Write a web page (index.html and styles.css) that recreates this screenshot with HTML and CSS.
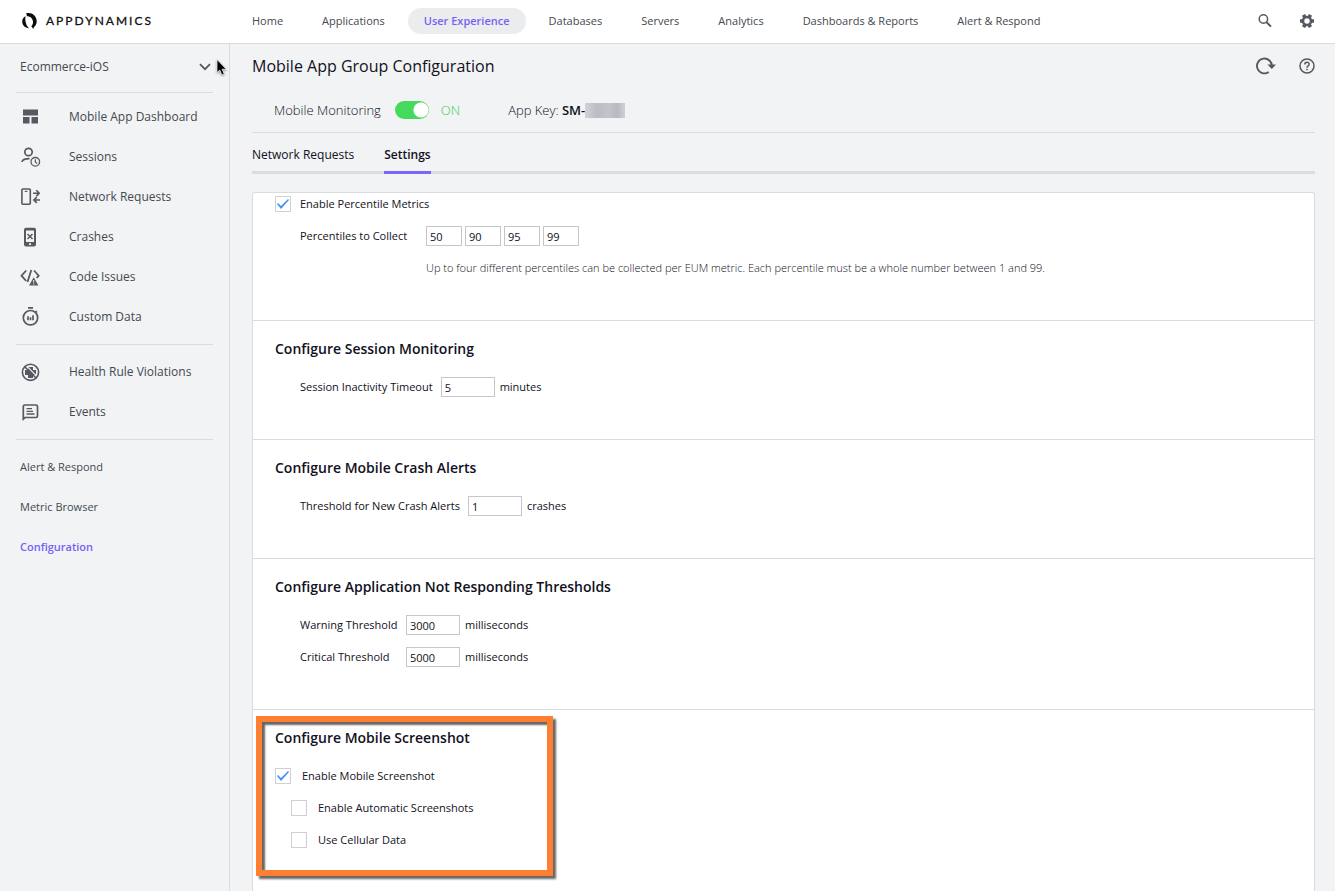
FILE: index.html
```html
<!DOCTYPE html>
<html lang="en">

<head>
    <meta charset="utf-8">
    <meta name="viewport" content="width=device-width, initial-scale=1.0">
    <title>Mobile App Group Configuration</title>
    <link rel="stylesheet" href="styles.css">
</head>

<body>
    <header class="topbar">
        <a class="logo" href="#">
            <svg width="16" height="18" viewBox="0 0 16 18" fill="#0c0c0c">
                <path d="M4.200 1.300C9 -.200 14.700 3.300 14.700 9.200C14.700 12 13.500 14 11.800 15.200L11.300 17L9.300 14.300C10.600 13 11.200 11.500 11 9.600C10.700 6.300 8.300 4.200 5 4.200Z"/>
                <path d="M3.600 4C1.300 5.400 .100 7.400 .200 9.700C.400 13.300 3 15.900 7 16.200C5.300 14.800 4.400 13 3.900 11C3.300 8.700 3 6.300 3.600 4Z"/>
            </svg>
            <span>APPDYNAMICS</span>
        </a>
        <nav class="topnav">
            <a href="#">Home</a>
            <a href="#">Applications</a>
            <a href="#" class="active">User Experience</a>
            <a href="#">Databases</a>
            <a href="#">Servers</a>
            <a href="#">Analytics</a>
            <a href="#">Dashboards &amp; Reports</a>
            <a href="#">Alert &amp; Respond</a>
        </nav>
        <div class="tools">
            <button class="icon-btn" aria-label="Search">
                <svg width="16" height="16" viewBox="0 0 16 16" fill="none" stroke="#555a61">
                    <circle cx="6.400" cy="6" r="4.200" stroke-width="1.500"/>
                    <path d="M9.600 9.200L14 13.600" stroke-width="2"/>
                </svg>
            </button>
            <button class="icon-btn" aria-label="Settings">
                <svg width="16" height="16" viewBox="0 0 16 16">
                    <g stroke="#555a61" stroke-width="3.600">
                        <path d="M1 8H15M4.500 1.940L11.500 14.060M11.500 1.940L4.500 14.060"/>
                    </g>
                    <circle cx="8" cy="8" r="5.300" fill="#555a61"/>
                    <circle cx="8" cy="8" r="2.700" fill="#fff"/>
                </svg>
            </button>
        </div>
    </header>

    <div class="layout">
        <aside class="sidebar">
            <div class="app-picker">
                <select aria-label="Application">
                    <option>Ecommerce-iOS</option>
                </select>
                <svg width="12" height="8" viewBox="0 0 12 8" fill="none" stroke="#555a61" stroke-width="1.800">
                    <path d="M1 1.200L6 6.200L11 1.200"/>
                </svg>
            </div>
            <nav class="menu">
                <a href="#">
                    <svg width="20" height="20" viewBox="0 0 20 20" fill="#555a61">
                        <path d="M3 2.500H18V8.500H3ZM3 10H9.500V16.500H3ZM11.500 10H18V16.500H11.500Z"/>
                    </svg>
                    Mobile App Dashboard
                </a>
                <a href="#">
                    <svg width="20" height="20" viewBox="0 0 20 20" fill="none" stroke="#555a61" stroke-width="1.700">
                        <circle cx="8.500" cy="5" r="3.700"/>
                        <path d="M2 15C2.300 12.700 4.500 11.700 9.500 11.700"/>
                        <circle cx="15.300" cy="14.800" r="4.300" stroke-width="1.300"/>
                        <path d="M15.300 12.200V15L17.200 16.600" stroke-width="1.200"/>
                    </svg>
                    Sessions
                </a>
                <a href="#">
                    <svg width="20" height="20" viewBox="0 0 20 20" fill="none" stroke="#555a61" stroke-width="1.600">
                        <rect x="1.900" y="2" width="8.400" height="15.300" rx="1"/>
                        <path d="M4.800 4.400H7.400" stroke-width="1.200"/>
                        <path d="M13 6.200H18.500M16.300 3.300L19.200 6.200L16.300 9.100M20 13H14M16.800 10.100L13.900 13L16.800 15.900"/>
                    </svg>
                    Network Requests
                </a>
                <a href="#">
                    <svg width="20" height="20" viewBox="0 0 20 20">
                        <path d="M6 .800H14A2 2 0 0 1 16 2.800V17.600A2 2 0 0 1 14 19.600H6A2 2 0 0 1 4 17.600V2.800A2 2 0 0 1 6 .800ZM6 3.500V15H14V3.500ZM9 16.300V18.100H11V16.300Z" fill="#555a61" fill-rule="evenodd"/>
                        <path d="M7.500 7L12.500 12M12.500 7L7.500 12" stroke="#555a61" stroke-width="1.500"/>
                    </svg>
                    Crashes
                </a>
                <a href="#">
                    <svg width="20" height="20" viewBox="0 0 20 20" fill="none" stroke="#555a61" stroke-width="1.800">
                        <path d="M6.200 3.500L1.500 8.700L6.200 14M14 3.500L18.700 8.700L16.700 11M11.300 3L7.500 15"/>
                        <path d="M13.700 10.200L18.400 18.600H9Z" fill="#555a61" stroke="none"/>
                        <path d="M13.700 13V15.500M13.700 16.300V17.500" stroke="#f1f3f5" stroke-width="1"/>
                    </svg>
                    Code Issues
                </a>
                <a href="#">
                    <svg width="20" height="20" viewBox="0 0 20 20" fill="none" stroke="#555a61" stroke-width="1.700">
                        <circle cx="10.500" cy="10.700" r="7.200"/>
                        <path d="M8 .900H13M15.500 4L17 5.500"/>
                        <path d="M8 9.200V13.200M10.500 10.200V13.200M13 8.200V13.200"/>
                    </svg>
                    Custom Data
                </a>
            </nav>
            <nav class="menu">
                <a href="#">
                    <svg width="20" height="20" viewBox="0 0 20 20">
                        <path d="M8 5H13V8H16V13H13V16H8V13H5V8H8Z" fill="#555a61"/>
                        <path d="M5.800 3.200L18 15.400" stroke="#f1f3f5" stroke-width="1.200"/>
                        <circle cx="10.500" cy="10.300" r="8.100" fill="none" stroke="#555a61" stroke-width="1.600"/>
                        <path d="M4.500 4.500L16.500 16.500" stroke="#555a61" stroke-width="1.600"/>
                    </svg>
                    Health Rule Violations
                </a>
                <a href="#">
                    <svg width="20" height="20" viewBox="0 0 20 20" fill="none" stroke="#555a61" stroke-width="1.700">
                        <path d="M3.300 17V4.500Q3.300 3 4.800 3H16Q17.500 3 17.500 4.500V14Q17.500 15.500 16 15.500H5Z"/>
                        <path d="M6.500 6.600H12M6.500 9.300H13M6.500 12H14.500" stroke-width="1.300"/>
                    </svg>
                    Events
                </a>
            </nav>
            <nav class="menu menu-small">
                <a href="#">Alert &amp; Respond</a>
                <a href="#">Metric Browser</a>
                <a href="#" class="active">Configuration</a>
            </nav>
        </aside>

        <main class="content">
            <div class="title-row">
                <h1>Mobile App Group Configuration</h1>
                <div class="tools">
                    <button class="icon-btn" aria-label="Refresh">
                        <svg width="20" height="20" viewBox="0 0 20 20" fill="none" stroke="#555a61" stroke-width="1.900">
                            <path d="M13.700 16A7.400 7.400 0 1 1 16.800 10.500"/>
                            <path d="M12.400 8.500H21L16.800 13Z" fill="#555a61" stroke="none"/>
                        </svg>
                    </button>
                    <button class="icon-btn" aria-label="Help">
                        <svg width="16" height="16" viewBox="0 0 16 16" fill="none" stroke="#555a61" stroke-width="1.500">
                            <circle cx="8" cy="8" r="7"/>
                            <path d="M5.800 6.500C5.800 3.400 10.300 3.600 10.200 6.300C10.100 7.900 8 7.900 8 9.700M8 10.800V12.300"/>
                        </svg>
                    </button>
                </div>
            </div>

            <div class="status-row">
                <label for="monitoring">Mobile Monitoring</label>
                <input type="checkbox" class="switch" id="monitoring" checked>
                <span class="on">ON</span>
                <span class="app-key">App Key: <strong>SM-</strong></span>
                <span class="masked"></span>
            </div>

            <nav class="tabs">
                <a href="#">Network Requests</a>
                <a href="#" class="active">Settings</a>
            </nav>

            <form class="panel">
                <section class="section section-first">
                    <div class="field">
                        <input type="checkbox" class="check" id="percentiles" checked>
                        <label for="percentiles">Enable Percentile Metrics</label>
                    </div>
                    <div class="field indent">
                        <label for="p1" class="label-wide">Percentiles to Collect</label>
                        <div class="percentiles">
                            <input type="text" id="p1" value="50">
                            <input type="text" value="90" aria-label="Second percentile">
                            <input type="text" value="95" aria-label="Third percentile">
                            <input type="text" value="99" aria-label="Fourth percentile">
                        </div>
                    </div>
                    <p class="note">Up to four different percentiles can be collected per EUM metric. Each percentile must be a whole number between 1 and 99.</p>
                </section>

                <section class="section">
                    <h2>Configure Session Monitoring</h2>
                    <div class="field indent">
                        <label for="timeout">Session Inactivity Timeout</label>
                        <input type="text" id="timeout" value="5">
                        <span class="unit">minutes</span>
                    </div>
                </section>

                <section class="section">
                    <h2>Configure Mobile Crash Alerts</h2>
                    <div class="field indent">
                        <label for="crashes">Threshold for New Crash Alerts</label>
                        <input type="text" id="crashes" value="1">
                        <span class="unit">crashes</span>
                    </div>
                </section>

                <section class="section">
                    <h2>Configure Application Not Responding Thresholds</h2>
                    <div class="field indent">
                        <label for="warning" class="label-threshold">Warning Threshold</label>
                        <input type="text" id="warning" value="3000">
                        <span class="unit">milliseconds</span>
                    </div>
                    <div class="field indent">
                        <label for="critical" class="label-threshold">Critical Threshold</label>
                        <input type="text" id="critical" value="5000">
                        <span class="unit">milliseconds</span>
                    </div>
                </section>

                <section class="section">
                    <h2>Configure Mobile Screenshot</h2>
                    <div class="field">
                        <input type="checkbox" class="check" id="screenshot" checked>
                        <label for="screenshot">Enable Mobile Screenshot</label>
                    </div>
                    <div class="field sub">
                        <input type="checkbox" class="check" id="automatic">
                        <label for="automatic">Enable Automatic Screenshots</label>
                    </div>
                    <div class="field sub">
                        <input type="checkbox" class="check" id="cellular">
                        <label for="cellular">Use Cellular Data</label>
                    </div>
                    <div class="highlight"></div>
                </section>
            </form>
        </main>
    </div>

    <svg class="cursor" width="12" height="18" viewBox="0 0 12 18">
        <path d="M1 .500V13.500L3.800 11L5.900 15.900L8.200 14.900L6.100 10.200H10.300Z" fill="#000" stroke="#fff" stroke-width=".700"/>
    </svg>
</body>

</html>
```
FILE: styles.css
```css
* {
    box-sizing: border-box;
}

body {
    margin: 0;
    height: 100vh;
    overflow: hidden;
    display: flex;
    flex-direction: column;
    background-color: #f1f3f5;
    color: #111122;
    font-family: "Open Sans", "Noto Sans", sans-serif;
    font-size: 11px;
    line-height: 20px;
}

a {
    color: inherit;
    text-decoration: none;
}

svg {
    display: block;
    flex: none;
    overflow: visible;
}

/* top bar */
.topbar {
    display: flex;
    align-items: center;
    height: 44px;
    flex: none;
    padding: 0 20px 2px 0;
    background-color: #fff;
    border-bottom: 1px solid #d9dcdf;
    color: #44494f;
}

.logo {
    display: flex;
    align-items: center;
    gap: 8px;
    width: 236px;
    padding-left: 22px;
    color: #111;
    font-family: Lato, sans-serif;
    font-size: 12px;
    letter-spacing: 2px;
    -webkit-text-stroke: 0.3px #111;
}

.topnav {
    display: flex;
    flex: 1;
    gap: 7px;
}

.topnav a {
    padding: 3px 16px;
    border-radius: 13px;
    white-space: nowrap;
}

.topnav .active {
    background-color: #ebecee;
    color: #7462f7;
    font-weight: 600;
}

.tools {
    display: flex;
    align-items: center;
    gap: 26px;
}

.icon-btn {
    padding: 0;
    border: none;
    background: none;
}

.layout {
    display: flex;
    flex: 1;
    min-height: 0;
}

/* sidebar */
.sidebar {
    width: 230px;
    flex: none;
    padding: 0 16px;
    border-right: 1px solid #d9dcdf;
    color: #44494f;
}

.app-picker {
    display: flex;
    align-items: center;
    height: 48px;
    padding: 0 2px 2px 4px;
}

.app-picker select {
    flex: 1;
    appearance: none;
    padding: 0;
    border: none;
    background: none;
    color: inherit;
    font: inherit;
    font-size: 12px;
}

.menu {
    padding: 7px 0;
    border-top: 1px solid #d9dcdf;
    font-size: 12px;
}

.app-picker + .menu {
    padding-top: 4px;
}

.menu a {
    display: flex;
    align-items: center;
    gap: 29px;
    height: 40px;
    padding-left: 4px;
}

.menu-small {
    font-size: 11px;
}

.menu .active {
    color: #7462f7;
    font-weight: 600;
}

/* content */
.content {
    display: flex;
    flex-direction: column;
    flex: 1;
    min-width: 0;
    padding: 0 20px 0 22px;
}

.title-row {
    display: flex;
    justify-content: space-between;
    align-items: center;
    height: 44px;
    flex: none;
}

h1 {
    margin: 0;
    font-size: 16px;
    font-weight: normal;
}

.title-row .tools {
    gap: 24px;
}

.status-row {
    display: flex;
    align-items: center;
    height: 45px;
    flex: none;
    padding-left: 22px;
    border-bottom: 1px solid #d9dcdf;
    font-size: 13px;
    font-weight: 300;
}

.switch {
    appearance: none;
    width: 34px;
    height: 18px;
    margin: 0 12px 0 14px;
    border-radius: 9px;
    background: radial-gradient(circle at 26px 9px, #fff 7px, #45da5d 8px);
}

.on {
    color: #30d04a;
}

.app-key {
    margin-left: 48px;
}

.app-key strong {
    font-weight: 600;
}

.masked {
    width: 40px;
    height: 15px;
    background: linear-gradient(90deg, #d2d3d8, #bcbdc4 30%, #c4c5cb 60%, #b7b8c0 80%, #cfd1d6);
}

.tabs {
    display: flex;
    gap: 30px;
    flex: none;
    height: 41px;
    border-bottom: 3px solid #dadddf;
    font-size: 12px;
}

.tabs a {
    height: 41px;
    padding-top: 12px;
}

.tabs .active {
    border-bottom: 3px solid #7868fa;
    font-weight: 600;
}

.panel {
    flex: 1;
    min-height: 0;
    margin-top: 18px;
    border: 1px solid #d9dcdf;
    border-bottom: none;
    border-radius: 3px 3px 0 0;
    background-color: #fff;
}

.section {
    position: relative;
    padding: 16px 22px 42px;
    border-bottom: 1px solid #d9dcdf;
}

.section:last-child {
    border-bottom: none;
}

.section-first {
    padding-top: 1px;
}

h2 {
    margin: 0 0 16px;
    font-size: 14px;
    font-weight: 600;
    line-height: 24px;
}

.field {
    display: flex;
    align-items: center;
    height: 20px;
    white-space: nowrap;
}

.field + .field {
    margin-top: 12px;
}

.indent {
    padding-left: 25px;
}

.sub {
    padding-left: 16px;
}

.label-wide {
    width: 118px;
}

.label-threshold {
    width: 98px;
}

.percentiles {
    display: flex;
    gap: 3px;
    margin-left: 8px;
}

.field input[type="text"] {
    width: 54px;
    height: 20px;
    padding: 1px 3px 0;
    border: 1px solid #c6c7c9;
    background-color: #fff;
    color: inherit;
    font: inherit;
}

.field > input[type="text"] {
    margin-left: 8px;
}

.field .percentiles input[type="text"] {
    width: 36px;
}

.unit {
    margin-left: 5px;
}

.check {
    appearance: none;
    width: 16px;
    height: 16px;
    margin: 0 11px 0 0;
    border: 1px solid #cfd1d4;
    background-color: #fff;
}

.section-first .check {
    margin-right: 9px;
}

.check:checked::before {
    content: "";
    display: block;
    width: 14px;
    height: 14px;
    background-color: #4390f5;
    clip-path: polygon(1px 7px, 2px 6px, 5px 9px, 12px 2px, 13px 3px, 5px 12px);
}

.note {
    margin: 12px 0 0 151px;
    font-weight: 300;
}

/* callout frame over the screenshot settings */
.highlight {
    position: absolute;
    top: 6px;
    left: 3px;
    width: 297px;
    height: 160px;
    border: 6px solid #ff7f32;
    box-shadow: 3px 3px 2px #666, inset 3px 3px 2px #666;
    pointer-events: none;
}

.cursor {
    position: absolute;
    top: 59px;
    left: 216px;
    filter: drop-shadow(0 1px 1px rgba(0, 0, 0, 0.4));
}
```
